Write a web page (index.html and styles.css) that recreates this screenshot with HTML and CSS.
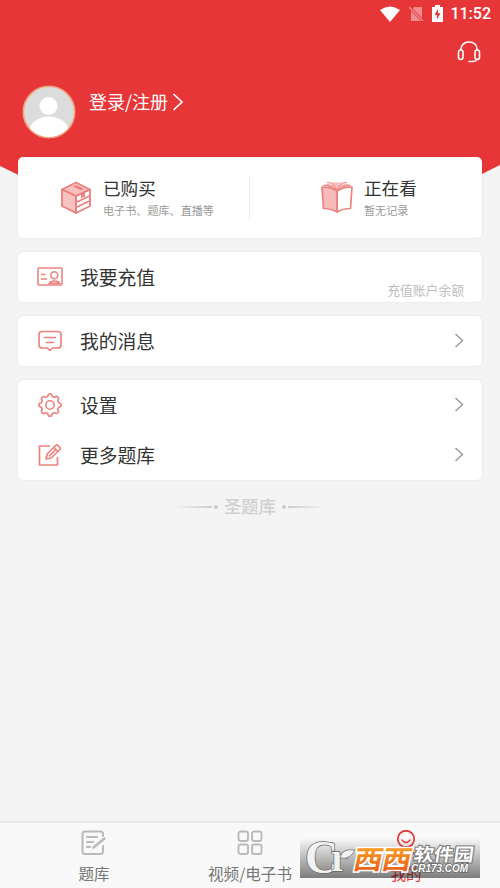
FILE: index.html
```html
<!DOCTYPE html>
<html lang="zh-CN">
<head>
<meta charset="utf-8">
<title>我的</title>
<link rel="stylesheet" href="styles.css">
</head>
<body>
<div class="app">
  <header class="hero">
    <div class="status">
      <svg width="20" height="16" viewBox="0 0 20 16"><path fill="#fff" d="M0 4Q10-3 20 4L10 16Z"/></svg>
      <svg width="15" height="16" viewBox="0 0 15 16"><path fill="#f18a8c" d="M5 1H13V15H2V5Z"/><path d="M0 1L14 15" stroke="#e73638" stroke-width="3"/><path d="M0 1L14 15" stroke="#f18a8c" stroke-width="1.3"/></svg>
      <svg width="11" height="17" viewBox="0 0 11 17"><path fill="#fff" d="M3 0H8V2H11V17H0V2H3Z"/><path fill="#e73638" d="M6 4L2.500 10H5V14.500L8.500 8.300H6Z"/></svg>
      <span class="clock">11:52</span>
    </div>
    <div class="service">
      <svg width="24" height="22" viewBox="0 0 24 22" fill="none" stroke="#fff" stroke-width="1.600"><path d="M4 9V8.500C4 4 7 1 12 1s8 3 8 7.500V9"/><rect x="1.500" y="9" width="4.500" height="9.500" rx="2.200"/><rect x="18" y="9" width="4.500" height="9.500" rx="2.200"/><path d="M20 18.500Q19 20.500 16 20.500H12" stroke-linecap="round"/></svg>
    </div>
    <div class="profile">
      <svg class="avatar" width="54" height="54" viewBox="0 0 54 54"><defs><clipPath id="face"><circle cx="27" cy="27" r="25"/></clipPath></defs><circle cx="27" cy="27" r="25.700" fill="#dcdcdc" stroke="#efa47d" stroke-width="1.600"/><g clip-path="url(#face)" fill="#fff"><circle cx="26.500" cy="21" r="9"/><ellipse cx="27" cy="47" rx="20" ry="15.500"/></g></svg>
      <span class="login">登录/注册</span>
      <svg width="12" height="20" viewBox="0 0 12 20" fill="none" stroke="#fff" stroke-width="1.700"><path d="M1.500 2L10 10L1.500 18"/></svg>
    </div>
  </header>

  <main class="content">
    <section class="card summary">
      <div class="entry bought">
        <svg width="32" height="34" viewBox="0 0 32 34" fill="none" stroke="#ec827f" stroke-width="1.900" stroke-linejoin="round"><path fill="#f7c2c0" d="M16 1.500L30 8.500L16 15L2 8.500Z"/><path fill="#f7c2c0" d="M2 8.500L16 15V32L2 25Z"/><path d="M16 15L30 8.500V25L16 32Z"/><path d="M17 21L29.500 15M17 26L29.500 20"/><path fill="#ec827f" stroke="none" d="M13 5.500L16 4L23 7.500V9L20 9ZM21 13L25 11V16.500L23 15.800L21 18Z"/></svg>
        <div><h2>已购买</h2><p>电子书、题库、直播等</p></div>
      </div>
      <div class="entry reading">
        <svg width="32" height="34" viewBox="0 0 32 34" fill="none" stroke="#ec827f" stroke-width="1.700" stroke-linejoin="round"><path fill="#f7bcb9" d="M1 6Q10 6 16 10V31Q10 27.500 2.500 27.500Z"/><path d="M31 6Q22 6 16 10V31Q22 27.500 29.500 27.500Z"/><path fill="#f7bcb9" stroke-width="1" d="M2.500 4.500Q11 1.500 16 10Q21 1.500 29.500 4.500Q21 5 16 10Q11 5 2.500 4.500ZM6 1.500Q13 1.500 16 10Q19 1.500 26 1.500"/></svg>
        <div><h2>正在看</h2><p>暂无记录</p></div>
      </div>
    </section>

    <section class="card">
      <div class="row">
        <svg class="icon" width="26" height="24" viewBox="0 0 26 24" fill="none" stroke="#ec827f" stroke-width="1.600"><rect x="1" y="3" width="24" height="17" rx="1"/><path d="M4 9.500H8.500M4 14H10"/><circle cx="17.300" cy="10.300" r="3.500"/><path d="M12 19.500Q12.500 16 17.300 16T23 19.500M12 18.300H23"/></svg>
        <span class="label">我要充值</span><span class="note">充值账户余额</span>
      </div>
    </section>

    <section class="card">
      <div class="row">
        <svg class="icon" width="26" height="24" viewBox="0 0 26 24" fill="none" stroke="#ec827f" stroke-width="1.700" stroke-linejoin="round" stroke-linecap="round"><path d="M5 2.500H21Q24 2.500 24 5.500V16Q24 19 21 19H15.500L13 21.500L10.500 19H5Q2 19 2 16V5.500Q2 2.500 5 2.500Z"/><path d="M7.500 8.500H18.500M9.500 13.500H16.500"/></svg>
        <span class="label">我的消息</span>
        <svg class="chevron" width="10" height="16" viewBox="0 0 10 16"><path d="M1.500 1L8.500 7.500L1.500 14"/></svg>
      </div>
    </section>

    <section class="card">
      <div class="row">
        <svg class="icon" width="26" height="24" viewBox="0 0 26 24" fill="none" stroke="#ec827f" stroke-width="1.600" stroke-linejoin="round"><path d="M10.800 3.400Q11 .8 13 .8T15.200 3.400L17.400 4.300Q19.300 2.600 20.800 4T20.700 7.600L21.600 9.800Q24.200 10 24.200 12T21.600 14.200L20.700 16.400Q22.400 18.300 20.900 19.800T17.400 19.700L15.200 20.600Q15 23.200 13 23.200T10.800 20.600L8.600 19.700Q6.700 21.400 5.200 19.900T5.300 16.400L4.400 14.200Q1.800 14 1.800 12T4.400 9.800L5.300 7.600Q3.600 5.700 5.100 4.200T8.600 4.300Z"/><circle cx="13" cy="12" r="4.200"/></svg>
        <span class="label">设置</span>
        <svg class="chevron" width="10" height="16" viewBox="0 0 10 16"><path d="M1.500 1L8.500 7.500L1.500 14"/></svg>
      </div>
      <div class="row">
        <svg class="icon" width="26" height="24" viewBox="0 0 26 24" fill="none" stroke="#ec827f" stroke-width="1.700" stroke-linejoin="round"><path d="M13 3H2.500V22H20.500V14"/><path d="M9 16L10.200 11L18.800 2.400Q19.800 1.500 20.800 2.400L22.900 4.500Q23.800 5.500 22.900 6.500L14.200 15Z"/><path d="M16.800 4.500L20.800 8.500M12 13.300L18.800 6.500"/></svg>
        <span class="label">更多题库</span>
        <svg class="chevron" width="10" height="16" viewBox="0 0 10 16"><path d="M1.500 1L8.500 7.500L1.500 14"/></svg>
      </div>
    </section>
    <div class="brand"><i class="line"></i><i class="dot"></i><span>圣题库</span><i class="dot"></i><i class="line right"></i></div>
  </main>

  <nav class="tabs">
    <div class="tab">
      <svg width="26" height="26" viewBox="0 0 26 26" fill="none" stroke="#bababa" stroke-width="2" stroke-linejoin="round" stroke-linecap="round"><path d="M22 6V4Q22 1.500 19.500 1.500H4Q1.500 1.500 1.500 4V21.500Q1.500 24 4 24H19.500Q22 24 22 21.500V16M6 7H16M6 12H12M6 17H9"/><path d="M12.500 17.500L23.500 8.500" stroke-width="2.500"/></svg>
      <span>题库</span>
    </div>
    <div class="tab">
      <svg width="26" height="26" viewBox="0 0 26 26" fill="none" stroke="#bababa" stroke-width="1.900"><rect x="1.500" y="1.500" width="9.500" height="9.500" rx="2"/><rect x="15" y="1.500" width="9.500" height="9.500" rx="2"/><rect x="1.500" y="14.500" width="9.500" height="9.500" rx="2"/><rect x="15" y="14.500" width="9.500" height="9.500" rx="2"/></svg>
      <span>视频/电子书</span>
    </div>
    <div class="tab active">
      <svg width="26" height="26" viewBox="0 0 26 26" fill="none" stroke="#e4393c" stroke-width="1.800" stroke-linecap="round"><circle cx="13" cy="9" r="8.200"/><path stroke-width="1.300" d="M9 10Q13 15 17 10"/><path d="M5 24Q6 19 10 18M21 24Q20 19 17 17"/></svg>
      <span>我的</span>
    </div>
  </nav>

  <svg class="watermark" width="180" height="40" viewBox="0 0 180 40">
    <defs>
      <linearGradient id="shade" x1="0" y1="0" x2="0" y2="1"><stop offset="0" stop-color="#000" stop-opacity="0"/><stop offset="1" stop-color="#000" stop-opacity=".5"/></linearGradient>
      <linearGradient id="amber" x1="0" y1="0" x2="0" y2="1"><stop offset="0" stop-color="#ffb52d"/><stop offset="1" stop-color="#e85312"/></linearGradient>
    </defs>
    <rect width="180" height="40" fill="url(#shade)"/>
    <g class="mark-cr"><text x="5" y="35" font-size="47" textLength="33" lengthAdjust="spacingAndGlyphs">C</text><text x="31" y="33" font-size="42" textLength="17" lengthAdjust="spacingAndGlyphs">r</text></g>
    <path d="M40 20Q42 10 55 12Q50 22 40 20Z" fill="#f2f2f2" stroke="#666" stroke-width=".7"/>
    <g class="mark-west">
      <text transform="translate(52 30.500) skewX(-12) scale(1.120 1)" x="0" y="0">西</text>
      <text transform="translate(80.500 30.500) skewX(-12) scale(1.120 1)" x="0" y="0">西</text>
    </g>
    <text class="mark-park" transform="translate(113 23) skewX(-8)" x="0" y="0" textLength="60" lengthAdjust="spacingAndGlyphs">软件园</text>
    <text class="mark-url" x="111" y="34" textLength="57" lengthAdjust="spacingAndGlyphs">CR173.COM</text>
  </svg>
</div>
</body>
</html>
```
FILE: styles.css
```css
* { box-sizing: border-box; }
body {
  margin: 0;
  font-family: "Noto Sans CJK SC", sans-serif;
  color: #333;
}
svg { display: block; flex: none; }
h2, p { margin: 0; font-weight: 400; }
.app {
  position: relative;
  display: flex;
  flex-direction: column;
  height: 888px;
  overflow: hidden;
  background: #f4f4f4;
}
.hero {
  height: 200px;
  flex: none;
  background: #e73638;
  clip-path: polygon(0 0, 100% 0, 100% 165px, 86% 200px, 14% 200px, 0 166px);
}
.status {
  display: flex;
  justify-content: flex-end;
  align-items: center;
  height: 27px;
  padding-right: 9px;
  color: #fff;
}
.status svg:nth-child(1) { margin-right: 2px; }
.status svg:nth-child(2) { margin-left: 7px; }
.status svg:nth-child(3) { margin-left: 8px; }
.clock {
  margin-left: 7px;
  font: 500 16px/28px Roboto, sans-serif;
}
.service {
  display: flex;
  justify-content: flex-end;
  padding: 14px 19px 0 0;
}
.profile {
  display: flex;
  align-items: flex-start;
  padding: 22px 0 0 22px;
  color: #fff;
}
.login {
  margin: 3px 4px 0 13px;
  font-size: 18px;
  line-height: 26px;
}
.profile svg:last-child { margin-top: 7px; }
.content {
  position: relative;
  flex: 1;
  display: flex;
  flex-direction: column;
  gap: 14px;
  margin-top: -43px;
  padding: 0 18px;
}
.card {
  background: #fff;
  border-radius: 5px;
  box-shadow: 0 0 2px rgba(0, 0, 0, .12);
}
.summary {
  display: flex;
  height: 81px;
}
.entry {
  display: flex;
  align-items: flex-start;
  width: 232px;
  padding-top: 19px;
}
.entry > svg { margin-top: 5px; }
.bought {
  padding-left: 42px;
  background: linear-gradient(#eee, #eee) right 19px / 1px 44px no-repeat;
}
.reading { padding-left: 71px; }
.entry div { margin-left: 11px; }
.entry h2 {
  font-size: 17.600px;
  line-height: 24px;
}
.entry p {
  margin-top: 2px;
  font-size: 11.100px;
  line-height: 16px;
  color: #999;
}
.row {
  display: flex;
  align-items: center;
  height: 50px;
  padding: 0 18px 0 19px;
}
.label {
  margin: -1px 0 0 17px;
  font-size: 18.800px;
  line-height: 28px;
}
.note {
  align-self: flex-end;
  margin: 0 0 2px auto;
  font-size: 12.800px;
  line-height: 20px;
  color: #bdbdbd;
}
.chevron {
  margin-left: auto;
  fill: none;
  stroke: #999;
  stroke-width: 1.400;
}
.brand {
  display: flex;
  justify-content: center;
  align-items: center;
  height: 26px;
  font-size: 17.300px;
  font-weight: 500;
  color: #d0d0d0;
}
.brand span { margin: -3px 4px 0; }
.line {
  width: 38px;
  height: 2px;
  background: linear-gradient(90deg, transparent, #ccc);
}
.line.right { transform: scaleX(-1); }
.dot {
  width: 4px;
  height: 4px;
  margin: 0 2px;
  border-radius: 50%;
  background: #ccc;
}
.tabs {
  display: flex;
  height: 67px;
  padding: 0 16px;
  border-top: 2px solid #ebebeb;
  background: #f9f9f9;
}
.tab {
  flex: 1;
  display: flex;
  flex-direction: column;
  align-items: center;
  padding-top: 7px;
  font-size: 15.600px;
  line-height: 22px;
  color: #777;
  white-space: nowrap;
}
.tab span { margin-top: 6px; }
.tab.active { color: #e4393c; }
.watermark {
  position: absolute;
  left: 300px;
  top: 838px;
  overflow: visible;
}
.mark-cr {
  font-family: "Liberation Serif", serif;
  font-weight: 700;
  fill: #f2f2f2;
  stroke: #666;
  stroke-width: 1.500px;
  paint-order: stroke;
}
.mark-west {
  font-size: 26px;
  font-weight: 700;
  fill: url(#amber);
  stroke: #fff;
  stroke-width: 3px;
  paint-order: stroke;
}
.mark-park {
  font-size: 18px;
  font-weight: 700;
  fill: #fff;
  stroke: #777;
  stroke-width: 2px;
  paint-order: stroke;
}
.mark-url {
  font: italic 700 11px "Liberation Sans", sans-serif;
  fill: #fff;
  stroke: #666;
  stroke-width: 1.500px;
  paint-order: stroke;
}
```
